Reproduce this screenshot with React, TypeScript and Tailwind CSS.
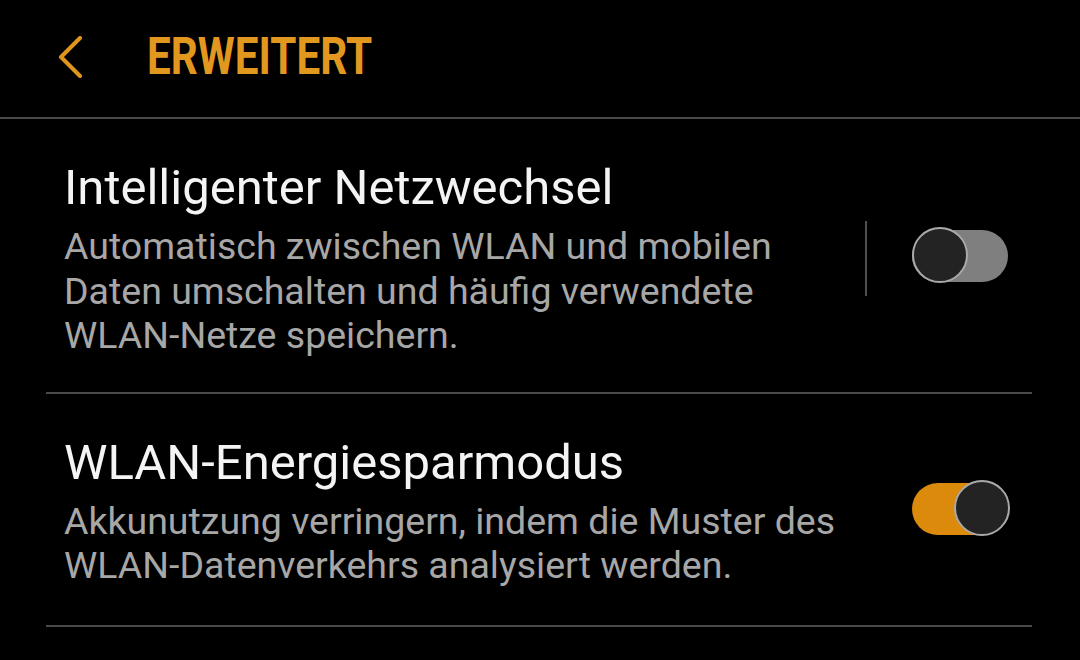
import { useState } from 'react'

const font = { fontFamily: 'Roboto, "Noto Sans", sans-serif' }

function BackChevron() {
  return (
    <svg width="28" height="42" viewBox="0 0 28 42" fill="none" className="shrink-0">
      <path d="M24 2 L5 21 L24 40" stroke="#e0951c" strokeWidth="4" strokeLinecap="round" strokeLinejoin="round" />
    </svg>
  )
}

function Toggle({ on, onChange }: { on: boolean; onChange: () => void }) {
  return (
    <button onClick={onChange} className="relative w-[98px] h-[56px] shrink-0">
      <span
        className={
          'absolute left-0 right-[2px] top-[3px] h-[52px] rounded-full ' + (on ? 'bg-[#dc8a0b]' : 'bg-[#7f7f7f]')
        }
      />
      <span
        className={
          'absolute top-0 w-[56px] h-[56px] rounded-full bg-[#232323] border-2 border-[#a9a9a9] ' +
          (on ? 'left-[42px]' : 'left-0')
        }
      />
    </button>
  )
}

interface SettingRowProps {
  title: string
  description: string
  on: boolean
  onToggle: () => void
  withSeparator?: boolean
  className?: string
}

function SettingRow({ title, description, on, onToggle, withSeparator, className }: SettingRowProps) {
  return (
    <div className={'flex items-center ml-[46px] mr-[48px] border-b-2 border-[#4a4a4a] ' + (className ?? '')}>
      <div className="w-[802px] pl-[18px] shrink-0">
        <div className="text-[49px] leading-[56px] text-[#f4f4f4]">{title}</div>
        <div className="mt-[8px] text-[37.5px] leading-[44.5px] text-[#a7a7a7]">{description}</div>
      </div>
      <div className="flex-1 flex items-center">
        {withSeparator ? <div className="w-[2px] h-[75px] bg-[#4f4f4f] ml-[17px]" /> : <div className="w-[2px] ml-[17px]" />}
        <div className="ml-[45px]">
          <Toggle on={on} onChange={onToggle} />
        </div>
      </div>
    </div>
  )
}

export default function App() {
  const [smartSwitch, setSmartSwitch] = useState(false)
  const [powerSave, setPowerSave] = useState(true)

  return (
    <div className="w-[1080px] h-[660px] bg-black overflow-hidden" style={font}>
      {/* Header */}
      <div className="h-[119px] flex items-center border-b-2 border-[#4a4a4a]">
        <div className="ml-[56px] mt-[-4px]">
          <BackChevron />
        </div>
        <h1 className="ml-[63px] text-[52px] font-bold text-[#e2981f] origin-left scale-x-[0.812] leading-none mt-[-4px]">
          ERWEITERT
        </h1>
      </div>

      <SettingRow
        className="pt-[41px] pb-[34px]"
        title="Intelligenter Netzwechsel"
        description="Automatisch zwischen WLAN und mobilen Daten umschalten und häufig verwendete WLAN-Netze speichern."
        on={smartSwitch}
        onToggle={() => setSmartSwitch(!smartSwitch)}
        withSeparator
      />
      <SettingRow
        className="pt-[41px] pb-[37px]"
        title="WLAN-Energiesparmodus"
        description="Akkunutzung verringern, indem die Muster des WLAN-Datenverkehrs analysiert werden."
        on={powerSave}
        onToggle={() => setPowerSave(!powerSave)}
      />
    </div>
  )
}
